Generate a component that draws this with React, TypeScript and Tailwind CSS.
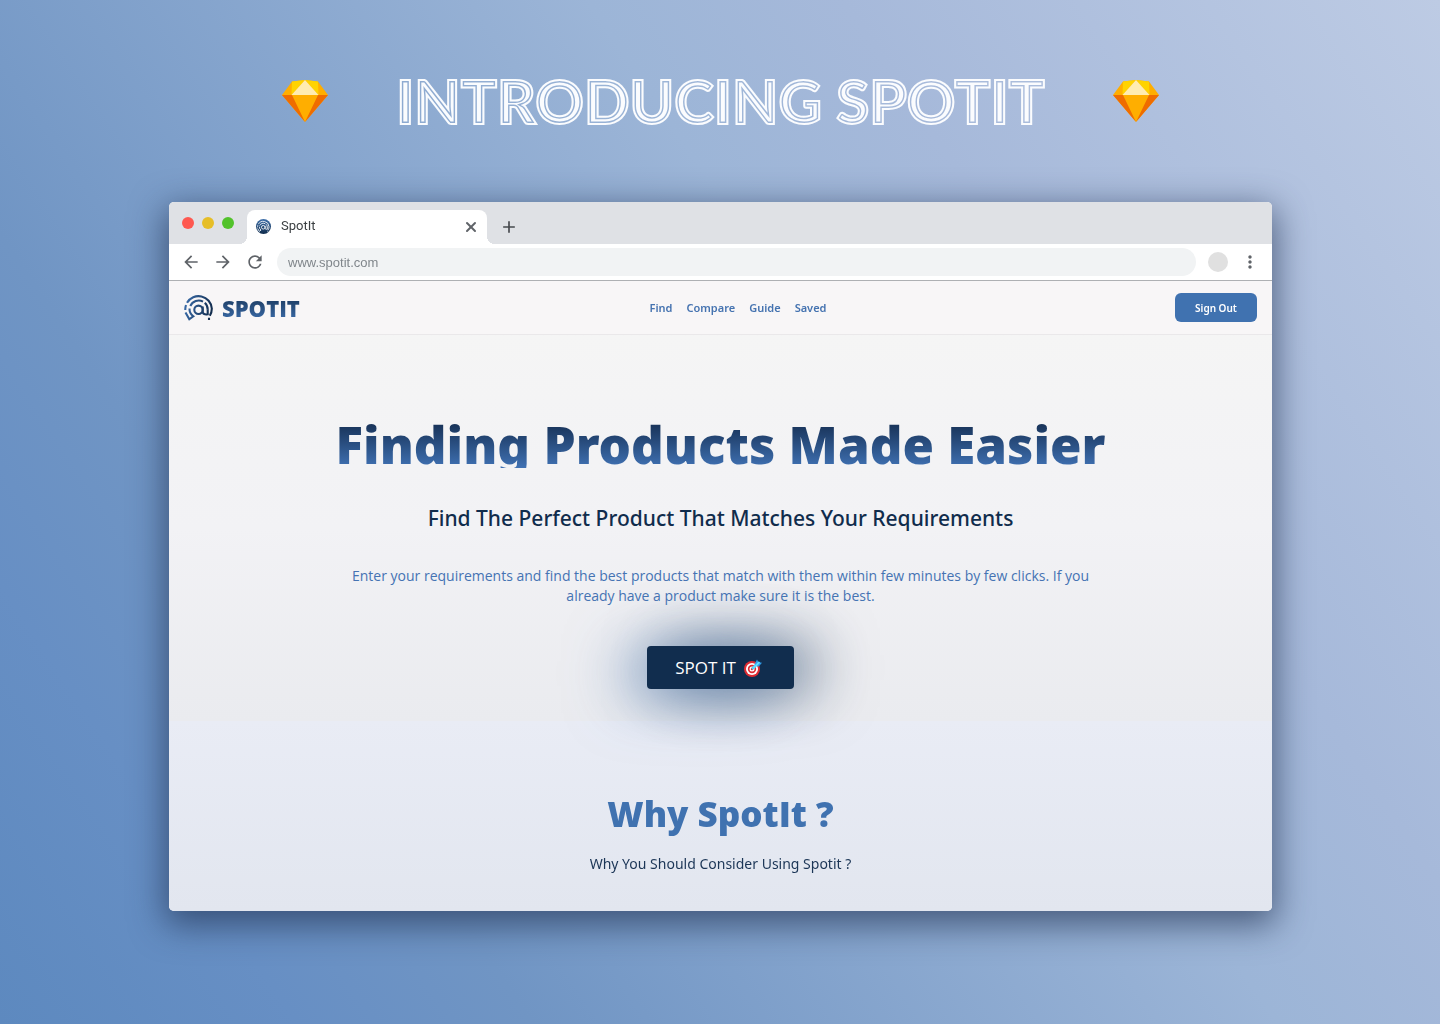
import React from "react";
import { X } from "lucide-react";
import { MdArrowBack, MdArrowForward, MdRefresh, MdMoreVert, MdAdd } from "react-icons/md";

function Gem() {
  return (
    <svg viewBox="0 0 46 42" className="h-[42px] w-[46px]" aria-hidden="true">
      <path d="M10 1.500 23 0l13 1.500L46 15 23 42 0 15z" fill="#ffae00" />
      <path d="M0 15h10l13 27zM46 15H36L23 42z" fill="#ef6c00" />
      <path d="M10 1.500 23 0 9.500 15zM36 1.500 23 0l13.500 15z" fill="#ffd300" />
      <path d="M23 0 9.500 15h27z" fill="#ffecb0" />
    </svg>
  );
}

function Emblem({ id, from, to }: { id: string; from: string; to: string }) {
  return (
    <svg viewBox="0 0 30 26" className="h-full w-full" fill="none" aria-hidden="true">
      <defs>
        <linearGradient id={id} gradientUnits="userSpaceOnUse" x1="0" y1="0" x2="30" y2="6">
          <stop offset="0" stopColor={from} />
          <stop offset="1" stopColor={to} />
        </linearGradient>
      </defs>
      <g stroke={`url(#${id})`} strokeWidth="2.100">
        <path d="M1.300 15A13.300 13.300 0 0 1 2 10M3 7.800A13.300 13.300 0 0 1 27.800 13.500 13.300 13.300 0 0 1 25.800 20.800" />
        <path d="M1.500 17.500 5.300 24.300 9.300 21.300A9.200 9.200 0 0 1 5.500 13.500M6.300 11A9.200 9.200 0 0 1 19 6.600M20.800 7.800A9.200 9.200 0 0 1 23.700 14.500" />
        <circle cx="14.500" cy="14.800" r="4.200" />
        <path d="M18.700 11.500v5c0 2.600 2.200 3.300 5 2.800v-5M25 22.800v2.200" />
      </g>
    </svg>
  );
}

function Target() {
  return (
    <svg viewBox="0 0 18 18" className="size-[18px]" aria-hidden="true">
      <circle cx="8" cy="10" r="8" fill="#e02c33" />
      <circle cx="8" cy="10" r="6" fill="#fff" />
      <circle cx="8" cy="10" r="4.200" fill="#e02c33" />
      <circle cx="8" cy="10" r="2.500" fill="#fff" />
      <circle cx="8" cy="10" r="1.200" fill="#e02c33" />
      <path d="m8 10 5-5" stroke="#50cff5" strokeWidth="2.500" />
      <path d="m10.500 5.500 2.500-5 1.500 2.800 3.500.5-3.500 4z" fill="#2f9be8" />
      <path d="m9.500 9 6-6" stroke="#5edcff" strokeWidth="1.800" />
    </svg>
  );
}

const links = ["Find", "Compare", "Guide", "Saved"];

export default function App() {
  return (
    <div className="min-h-screen bg-[linear-gradient(56deg,#5d89bf_0%,#678fc4_14%,#7095c4_25%,#9cb5d7_60%,#a6b9da_72%,#bdcbe4_100%)] pt-[72px] pr-[168px] pb-28 pl-[169px] font-['Noto_Sans',sans-serif]">
      <header className="flex h-[58px] items-center justify-center gap-[68px]">
        <Gem />
        <h1
          data-text="INTRODUCING SPOTIT"
          className="relative font-['Lato',sans-serif] text-[60px] leading-[60px] font-black whitespace-nowrap text-[#f4f5f8] mix-blend-screen [-webkit-text-stroke:5px_black] before:absolute before:inset-0 before:text-transparent before:content-[attr(data-text)] before:[-webkit-text-stroke:2px_#f4f5f8]"
        >
          INTRODUCING SPOTIT
        </h1>
        <Gem />
      </header>

      <div className="mt-[72px] overflow-hidden rounded-[5px] bg-white shadow-[0_10px_34px_4px_rgba(30,48,80,0.65)]">
        <div className="flex h-[42px] items-end bg-[#dfe1e5]">
          <div className="flex h-full w-[78px] items-center gap-2 pl-[13px]">
            <span className="size-3 rounded-full bg-[#fe5850]" />
            <span className="size-3 rounded-full bg-[#e6be28]" />
            <span className="size-3 rounded-full bg-[#52c22b]" />
          </div>
          <div className="relative flex h-[34px] w-60 items-center rounded-t-lg bg-white pr-2 pb-[2px] pl-[9px] before:absolute before:right-full before:bottom-0 before:size-2 before:bg-[radial-gradient(circle_at_0_0,transparent_8px,white_8px)] after:absolute after:bottom-0 after:left-full after:size-2 after:bg-[radial-gradient(circle_at_100%_0,transparent_8px,white_8px)]">
            <span className="size-[15px] rounded-full bg-linear-to-b from-[#3f70aa] to-[#112d4e] p-px">
              <Emblem id="tab-emblem" from="#e5edf6" to="#ffffff" />
            </span>
            <span className="ml-[10px] flex-1 font-['Roboto',sans-serif] text-[13px] text-[#3c4043]">SpotIt</span>
            <button aria-label="Close tab" className="pt-[2px] text-[#5f6368]"><X size={16} strokeWidth={3} /></button>
          </div>
          <button aria-label="New tab" className="mb-[7px] ml-3 text-[#46494d]"><MdAdd size={20} /></button>
        </div>

        <div className="flex h-[37px] items-center border-b border-[#aeb0b3] pr-3 pl-3 text-[#5f6368]">
          <div className="flex items-center gap-3">
            <button aria-label="Back"><MdArrowBack size={20} /></button>
            <button aria-label="Forward"><MdArrowForward size={20} /></button>
            <button aria-label="Reload"><MdRefresh size={20} /></button>
          </div>
          <input
            aria-label="Address"
            defaultValue="www.spotit.com"
            className="ml-3 h-7 min-w-0 flex-1 rounded-full bg-[#f1f3f4] px-[11px] font-['Liberation_Sans',sans-serif] text-[13px] text-[#80868b] outline-none"
          />
          <button aria-label="Profile" className="ml-3 size-5 rounded-full bg-[#e0e0e0]" />
          <button aria-label="Menu" className="ml-3"><MdMoreVert size={20} /></button>
        </div>

        <nav className="grid h-[54px] grid-cols-[1fr_auto_1fr] items-center border-b border-[#eae8ea] bg-[#f8f6f7] px-[15px]">
          <a href="#" className="flex items-center gap-2">
            <span className="h-[26px] w-[30px]"><Emblem id="nav-emblem" from="#3c70b0" to="#122c4d" /></span>
            <span className="bg-linear-to-b from-[#173456] to-[#3f70b0] bg-clip-text font-['Open_Sans',sans-serif] text-[22px] leading-7 font-extrabold text-transparent">SPOTIT</span>
          </a>
          <div className="flex gap-[14px] pt-[2px] pl-[35px] text-[11px] font-semibold text-[#4573b0]">
            {links.map((link) => (
              <a key={link} href="#">{link}</a>
            ))}
          </div>
          <button className="h-[29px] w-[82px] justify-self-end rounded-md bg-[#4072b0] pt-px text-[10px] font-semibold text-white">Sign Out</button>
        </nav>

        <main className="text-center">
          <section className="relative h-[386px] bg-linear-to-b from-[#f5f5f5] via-[#f2f2f5] to-[#eaebef] pt-[81px]">
            <h2 className="mx-auto h-[52px] w-fit bg-linear-to-b from-[#12294a] to-[#4072b4] bg-clip-text text-[51px] leading-[56px] font-black text-transparent">
              Finding Products Made Easier
            </h2>
            <p className="mt-9 text-[21px] leading-7 font-medium text-[#102c4c]">Find The Perfect Product That Matches Your Requirements</p>
            <p className="mx-auto mt-[34px] w-[760px] max-w-full font-['Open_Sans',sans-serif] text-sm leading-5 text-[#4573b3]">
              Enter your requirements and find the best products that match with them within few minutes by few clicks. If you
              already have a product make sure it is the best.
            </p>
            <button className="mx-auto mt-10 flex h-[43px] w-[147px] items-center justify-center gap-2 rounded bg-[#112d4e] pr-1 font-['Open_Sans',sans-serif] text-[17px] text-white shadow-[-20px_6px_60px_rgba(63,114,175,0.6),20px_0_60px_rgba(17,45,78,0.65)]">
              SPOT IT
              <Target />
            </button>
          </section>
          <section className="h-[190px] bg-linear-to-b from-[#e9ecf5] to-[#e2e6ef] pt-[69px]">
            <h2 className="font-['Open_Sans',sans-serif] text-[35px] leading-[48px] font-extrabold text-[#4072b0]">Why SpotIt ?</h2>
            <p className="mt-4 text-sm leading-5 text-[#1b3556]">Why You Should Consider Using Spotit ?</p>
          </section>
        </main>
      </div>
    </div>
  );
}
